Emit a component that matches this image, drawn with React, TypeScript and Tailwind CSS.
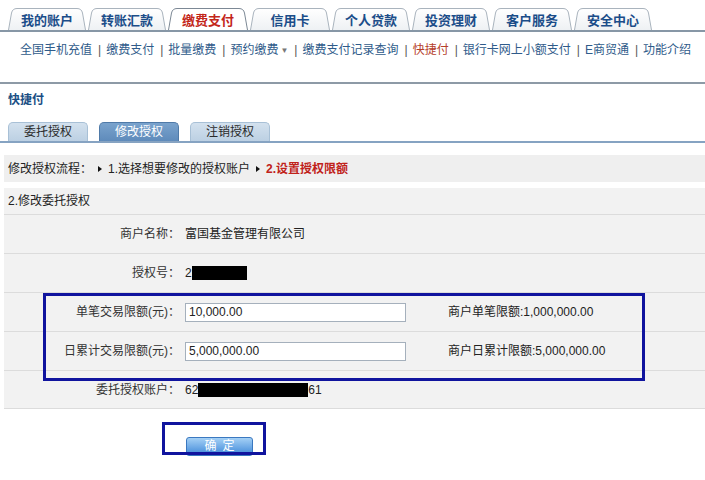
import React from 'react';

const TOP_TABS = [
  { label: '我的账户', w: 78, cls: 'w-[78px]' },
  { label: '转账汇款', w: 78, cls: 'w-[78px]' },
  { label: '缴费支付', w: 80, cls: 'w-[80px]', active: true },
  { label: '信用卡', w: 80, cls: 'w-[80px]' },
  { label: '个人贷款', w: 78, cls: 'w-[78px]' },
  { label: '投资理财', w: 78, cls: 'w-[78px]' },
  { label: '客户服务', w: 80, cls: 'w-[80px]' },
  { label: '安全中心', w: 78, cls: 'w-[78px]' },
];

const SUB_NAV = ['全国手机充值', '缴费支付', '批量缴费', '预约缴费', '缴费支付记录查询', '快捷付', '银行卡网上小额支付', 'E商贸通', '功能介绍'];

const AUTH_TABS = [
  { label: '委托授权' },
  { label: '修改授权', active: true },
  { label: '注销授权' },
];

function TopTab({ label, w, cls, active }: { label: string; w: number; cls: string; active?: boolean }) {
  const d = `M0.5 22 L3.5 5 Q4.5 0.5 9 0.5 L${w - 9} 0.5 Q${w - 4.5} 0.5 ${w - 3.5} 5 L${w - 0.5} 22`;
  return (
    <div className={`relative h-[22px] flex items-center justify-center ${cls}`}>
      <svg className="absolute inset-0" width={w} height={22}>
        <defs>
          <linearGradient id={`g-${label}`} x1="0" y1="0" x2="0" y2="1">
            <stop offset="0" stopColor="#ffffff" />
            <stop offset="1" stopColor={active ? '#ffffff' : '#eef1f4'} />
          </linearGradient>
        </defs>
        <path d={d} fill={`url(#g-${label})`} stroke={active ? '#7c8895' : '#a9b3bd'} strokeWidth="1" />
      </svg>
      <span className={`relative text-[13px] font-bold leading-none pt-[2px] ${active ? 'text-[#c3261a]' : 'text-[#1b4d89]'}`}>
        {label}
      </span>
    </div>
  );
}

function Arrow() {
  return <span className="inline-block w-0 h-0 border-y-[3.5px] border-y-transparent border-l-[4px] border-l-[#111] mx-[6px]" />;
}

function Row({ label, children, last }: { label: string; children: React.ReactNode; last?: boolean }) {
  return (
    <div className={`flex items-center h-[39px] border-t border-[#dcdcdc] ${last ? 'border-b' : ''}`}>
      <div className="w-[176px] text-right text-[12px] text-[#333]">{label}</div>
      <div className="pl-[5px] flex items-center text-[12px] text-[#222]">{children}</div>
    </div>
  );
}

export default function App() {
  return (
    <div className="w-[705px] h-[480px] overflow-hidden bg-white font-['Liberation_Sans','Noto_Sans_CJK_SC',sans-serif]">
      {/* top tabs */}
      <div className="pt-[8px] pl-[8px] flex items-end gap-[2px] border-b-2 border-[#8797a6]">
        {TOP_TABS.map((t) => (
          <TopTab key={t.label} {...t} />
        ))}
      </div>

      {/* sub nav */}
      <div className="h-[52px] pt-[11px] pl-[20px] flex items-start text-[12px] leading-[14px] text-[#2f5b8a] border-b-2 border-[#8d9aa6]">
        {SUB_NAV.map((item, i) => (
          <React.Fragment key={item}>
            {i > 0 && <span className="pl-[6px] pr-[5px] text-[#555]">|</span>}
            <span className={item === '快捷付' ? 'text-[#b5402a]' : ''}>
              {item}
              {item === '预约缴费' && <span className="ml-[2px] text-[8px] text-[#777] align-middle">▼</span>}
            </span>
          </React.Fragment>
        ))}
      </div>

      {/* title */}
      <div className="h-[38px] pt-[9px] pl-[8px] text-[12px] leading-[14px] font-bold text-[#1a4e84]">快捷付</div>

      {/* auth tabs */}
      <div className="pl-[8px] flex items-end gap-[11px] border-b-2 border-[#86a3c2]">
        {AUTH_TABS.map((t) => (
          <div
            key={t.label}
            className={`h-[19px] w-[80px] rounded-t-[5px] border border-b-0 flex items-center justify-center text-[12px] leading-none ${
              t.active
                ? 'bg-gradient-to-b from-[#7aa3cd] to-[#5f8bbb] border-[#4f7aa8] text-white'
                : 'bg-gradient-to-b from-[#d3e1ee] to-[#bcd0e3] border-[#a8c0d6] text-[#2a2a2a]'
            }`}
          >
            {t.label}
          </div>
        ))}
      </div>

      {/* flow */}
      <div className="mt-[12px] ml-[4px] h-[27px] bg-[#efefef] pl-[4px] flex items-center text-[12px] text-[#222]">
        <span>修改授权流程：</span>
        <Arrow />
        <span>1.选择想要修改的授权账户</span>
        <Arrow />
        <span className="font-bold text-[#c0221a]">2.设置授权限额</span>
      </div>

      {/* section */}
      <div className="relative mt-[6px] ml-[4px] bg-[#f2f2f2]">
        <div className="h-[26px] pl-[4px] flex items-center text-[12px] text-[#222]">2.修改委托授权</div>
        <Row label="商户名称：">富国基金管理有限公司</Row>
        <Row label="授权号：">
          <span>2</span>
          <span className="inline-block w-[55px] h-[14px] bg-black" />
        </Row>
        <Row label="单笔交易限额(元)：">
          <div className="w-[221px] h-[19px] border border-[#a5b0bc] bg-white px-[3px] flex items-center">10,000.00</div>
          <span className="ml-[42px]">商户单笔限额:1,000,000.00</span>
        </Row>
        <Row label="日累计交易限额(元)：">
          <div className="w-[221px] h-[19px] border border-[#a5b0bc] bg-white px-[3px] flex items-center">5,000,000.00</div>
          <span className="ml-[42px]">商户日累计限额:5,000,000.00</span>
        </Row>
        <Row label="委托授权账户：" last>
          <span>62</span>
          <span className="inline-block w-[110px] h-[14px] bg-black" />
          <span>61</span>
        </Row>
        <div className="absolute left-[39px] top-[105px] w-[602px] h-[88px] border-[3px] border-[#10149e]" />
      </div>

      {/* submit */}
      <div className="pt-[24px] pl-[186px]">
        <div className="relative w-[67px]">
          <button className="w-[67px] h-[19px] rounded-[3px] border border-[#3a78c0] bg-gradient-to-b from-[#a4d0f5] to-[#3d88d8] text-white text-[12px] leading-none tracking-[6px] pl-[6px]">
            确定
          </button>
          <div className="absolute left-[-24px] top-[-11px] w-[104px] h-[33px] border-[3px] border-[#10149e]" />
        </div>
      </div>
    </div>
  );
}
